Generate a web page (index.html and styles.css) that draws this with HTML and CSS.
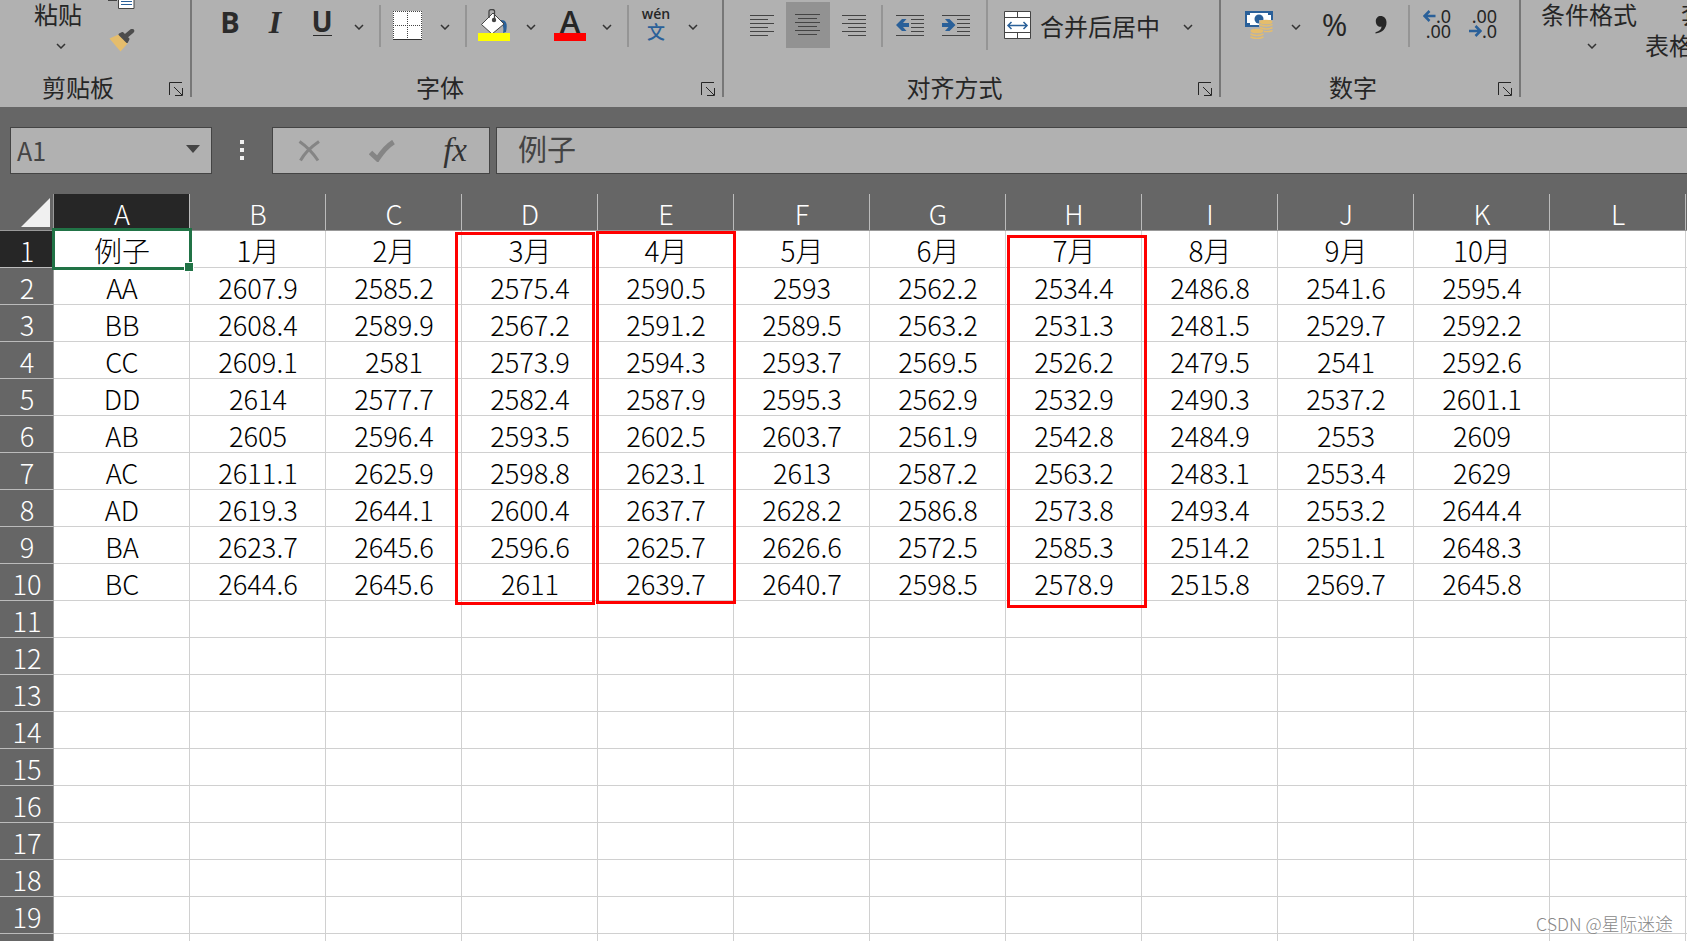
FILE: index.html
```html
<!DOCTYPE html>
<html lang="zh-CN">
<head>
<meta charset="utf-8">
<title>例子</title>
<link rel="stylesheet" href="styles.css">
</head>
<body>
<svg class="defs" width="0" height="0">
  <symbol id="chev" viewBox="0 0 10 6"><path d="M1 1l4 4 4-4" fill="none" stroke="#333" stroke-width="1.5"/></symbol>
  <symbol id="launch" viewBox="0 0 14 14"><path d="M.5 13V.5H13M5 5l8 8M13.5 6v7.500H6" fill="none" stroke="#262626"/></symbol>
</svg>
<div class="ribbon">
  <section class="group g-clip">
    <div class="clip-tools">
      <div class="stack"><span>粘贴</span><svg class="chev down"><use href="#chev"/></svg></div>
      <div class="clip-icons">
        <svg width="28" height="10"><path d="M0 .5h9" stroke="#444"/><path d="M10.500-3v11.500h15.500V-3" fill="#fff" stroke="#444"/><path d="M13 1.500h11M13 4.500h11" stroke="#2a6099"/></svg>
        <svg class="brush" width="27" height="24"><path d="M1.500 9.500l9-4 9 9-7 8z" fill="#e5bd6c"/><path d="M11.500 5.500l3-1.500 6 6-1.500 3z" fill="#4d4d4d" stroke="#4d4d4d" stroke-linejoin="round" stroke-width="2"/><path d="M18 7l6-5" stroke="#4d4d4d" stroke-width="4.500" stroke-linecap="round"/></svg>
      </div>
    </div>
    <div class="caption"><span>剪贴板</span><svg width="14" height="14"><use href="#launch"/></svg></div>
  </section>
  <section class="group g-font">
    <div class="tools">
      <b class="bold">B</b><i class="ital">I</i><b class="under">U</b><svg class="chev"><use href="#chev"/></svg><hr>
      <svg width="29" height="29"><path fill="#fff" d="M0 0h29v29H0z"/><path d="M0 .5h29M.5 0v28M28.500 0v28M14.500 0v28M0 14.500h29" stroke="#444" stroke-dasharray="1 1"/><path d="M0 28.500h29" stroke="#333"/></svg>
      <svg class="chev"><use href="#chev"/></svg><hr>
      <svg width="32" height="32"><path d="M23 11c5 0 7 3 5 12l-3 1c1-5 0-8-3-11z" fill="#2a6099"/><path d="M3.500 15.500L15 4l11 11-12 10z" fill="#fff" stroke="#444"/><path d="M11 9V2.500q0-2 3-2t2.500 3V10" fill="none" stroke="#444" stroke-width="1.300"/><circle cx="16" cy="11" r="2.200" fill="#444"/><path fill="#ff0" d="M0 24h32v8H0z"/></svg>
      <svg class="chev"><use href="#chev"/></svg>
      <div class="fcolor"><span>A</span></div>
      <svg class="chev"><use href="#chev"/></svg><hr>
      <div class="pinyin"><span>wén</span><em>文</em></div>
      <svg class="chev"><use href="#chev"/></svg>
    </div>
    <div class="caption"><span>字体</span><svg width="14" height="14"><use href="#launch"/></svg></div>
  </section>
  <section class="group g-align">
    <div class="tools">
      <svg width="24" height="22"><path d="M0 1.500h24M0 5.500h18M0 9.500h24M0 13.500h18M0 17.500h24M0 21.500h18" stroke="#444"/></svg>
      <div class="active"><svg width="26" height="22"><path d="M0 .5h25M3 4.500h19M0 8.500h25M3 12.500h19M0 16.500h25M3 20.500h19" stroke="#444"/></svg></div>
      <svg width="24" height="22"><path d="M0 1.500h24M6 5.500h18M0 9.500h24M6 13.500h18M0 17.500h24M6 21.500h18" stroke="#444"/></svg><hr>
      <svg width="28" height="22"><path d="M0 1.500h28M15 5.500h13M15 9.500h13M15 13.500h13M15 17.500h13M0 21.500h28" stroke="#444"/><path d="M0 11l6-6h4.500L7 9h6v4H7l3.500 4H6z" fill="#2a6099"/></svg>
      <svg width="28" height="22"><path d="M0 1.500h28M15 5.500h13M15 9.500h13M15 13.500h13M15 17.500h13M0 21.500h28" stroke="#444"/><path d="M13.500 11l-6-6H3l3.500 4H0v4h6.500L3 17h4.500z" fill="#2a6099"/></svg><hr class="tall">
      <svg width="27" height="28"><path d="M.5.500h26v27H.5zM.5 6.500h26M.5 21.500h26M13.500.500v6M13.500 21.500v6" fill="#fff" stroke="#444"/><path d="M3.500 14.500h20M7.500 11L4 14.500 7.500 18M19.500 11l3.500 3.500-3.500 3.500" fill="none" stroke="#2a6099" stroke-width="1.500"/></svg>
      <span class="merge">合并后居中</span><svg class="chev"><use href="#chev"/></svg>
    </div>
    <div class="caption"><span>对齐方式</span><svg width="14" height="14"><use href="#launch"/></svg></div>
  </section>
  <section class="group g-num">
    <div class="tools">
      <svg width="28" height="28"><path fill="#2a6099" d="M0 0h28v16H0z"/><path d="M5 2h18v2h3v8h-3v2H5v-2H2V4h3z" fill="#fff"/><circle cx="14" cy="8" r="4.500" fill="#2a6099"/><path d="M14 9h14v13H19v6H5V17h9z" fill="#b1b1b1"/><g fill="#e5bd6c"><ellipse cx="21" cy="11" rx="6.500" ry="2.300"/><ellipse cx="12" cy="20" rx="6.500" ry="2.300"/></g><path d="M14.500 13.500q6.500 3 13 0M15 16.500q6.500 3 12.500 0M19 20.500q5 .5 8.500-1M5.500 23q6.500 3 13 0M5.500 26q6.500 3 13 0" fill="none" stroke="#e5bd6c" stroke-width="1.500"/></svg>
      <svg class="chev"><use href="#chev"/></svg>
      <span class="pct">%</span>
      <svg width="12" height="18"><path d="M5.500 0C9 0 11.500 2.500 11.500 6.500c0 6-4 10-11 11v-1.300c4-1 6-3 6-5.700C3 11.500.8 8.500.8 5.200.8 2 3 0 5.500 0z" fill="#262626"/></svg><hr>
      <div class="dec"><span><svg width="13" height="12"><path d="M12.500 6H2M6.500 1L1.500 6l5 5" fill="none" stroke="#2a6099" stroke-width="2.500"/></svg>.0</span><span>.00</span></div>
      <div class="dec"><span>.00</span><span><svg width="13" height="12"><path d="M0 6h11M6.500 1l5 5-5 5" fill="none" stroke="#2a6099" stroke-width="2.500"/></svg>.0</span></div>
    </div>
    <div class="caption"><span>数字</span><svg width="14" height="14"><use href="#launch"/></svg></div>
  </section>
  <section class="g-style">
    <div class="stack"><span>条件格式</span><svg class="chev down"><use href="#chev"/></svg></div>
    <div class="tablefmt"><span class="indent">套用</span><span>表格格式</span></div>
  </section>
</div>
<div class="formula">
  <div class="box name"><span>A1</span><svg width="14" height="8"><path d="M0 0h14L7 8z" fill="#444"/></svg></div>
  <div class="dots"><i></i><i></i><i></i></div>
  <div class="box fx">
    <svg width="22" height="22"><path d="M1.500 1.500C8 6 15 13 20 20.500M21 1.500C13 7 6 14 2.500 20.500" fill="none" stroke="#858585" stroke-width="3"/></svg>
    <svg width="26" height="22"><path d="M1.500 12.500l7 6.500C13 12 18 6 24.500 2" fill="none" stroke="#858585" stroke-width="5"/></svg>
    <span>fx</span>
  </div>
  <div class="box value">例子</div>
</div>
<div class="sheet">
  <div class="head"><div class="corner"><svg width="29" height="29"><path d="M29 0v29H0z" fill="#f0f0f0"/></svg></div><span class="sel">A</span><span>B</span><span>C</span><span>D</span><span>E</span><span>F</span><span>G</span><span>H</span><span>I</span><span>J</span><span>K</span><span>L</span></div>
  <div class="row title"><b class="sel">1</b><span>例子</span><span>1月</span><span>2月</span><span>3月</span><span>4月</span><span>5月</span><span>6月</span><span>7月</span><span>8月</span><span>9月</span><span>10月</span></div>
  <div class="row"><b>2</b><span>AA</span><span>2607.9</span><span>2585.2</span><span>2575.4</span><span>2590.5</span><span>2593</span><span>2562.2</span><span>2534.4</span><span>2486.8</span><span>2541.6</span><span>2595.4</span></div>
  <div class="row"><b>3</b><span>BB</span><span>2608.4</span><span>2589.9</span><span>2567.2</span><span>2591.2</span><span>2589.5</span><span>2563.2</span><span>2531.3</span><span>2481.5</span><span>2529.7</span><span>2592.2</span></div>
  <div class="row"><b>4</b><span>CC</span><span>2609.1</span><span>2581</span><span>2573.9</span><span>2594.3</span><span>2593.7</span><span>2569.5</span><span>2526.2</span><span>2479.5</span><span>2541</span><span>2592.6</span></div>
  <div class="row"><b>5</b><span>DD</span><span>2614</span><span>2577.7</span><span>2582.4</span><span>2587.9</span><span>2595.3</span><span>2562.9</span><span>2532.9</span><span>2490.3</span><span>2537.2</span><span>2601.1</span></div>
  <div class="row"><b>6</b><span>AB</span><span>2605</span><span>2596.4</span><span>2593.5</span><span>2602.5</span><span>2603.7</span><span>2561.9</span><span>2542.8</span><span>2484.9</span><span>2553</span><span>2609</span></div>
  <div class="row"><b>7</b><span>AC</span><span>2611.1</span><span>2625.9</span><span>2598.8</span><span>2623.1</span><span>2613</span><span>2587.2</span><span>2563.2</span><span>2483.1</span><span>2553.4</span><span>2629</span></div>
  <div class="row"><b>8</b><span>AD</span><span>2619.3</span><span>2644.1</span><span>2600.4</span><span>2637.7</span><span>2628.2</span><span>2586.8</span><span>2573.8</span><span>2493.4</span><span>2553.2</span><span>2644.4</span></div>
  <div class="row"><b>9</b><span>BA</span><span>2623.7</span><span>2645.6</span><span>2596.6</span><span>2625.7</span><span>2626.6</span><span>2572.5</span><span>2585.3</span><span>2514.2</span><span>2551.1</span><span>2648.3</span></div>
  <div class="row"><b>10</b><span>BC</span><span>2644.6</span><span>2645.6</span><span>2611</span><span>2639.7</span><span>2640.7</span><span>2598.5</span><span>2578.9</span><span>2515.8</span><span>2569.7</span><span>2645.8</span></div>
  <div class="row"><b>11</b></div>
  <div class="row"><b>12</b></div>
  <div class="row"><b>13</b></div>
  <div class="row"><b>14</b></div>
  <div class="row"><b>15</b></div>
  <div class="row"><b>16</b></div>
  <div class="row"><b>17</b></div>
  <div class="row"><b>18</b></div>
  <div class="row"><b>19</b></div>
  <div class="row"><b></b></div>
  <div class="cursor"></div><div class="handle"></div>
  <div class="mark mark-d"></div><div class="mark mark-e"></div><div class="mark mark-h"></div>
  <div class="watermark">CSDN @星际迷途</div>
</div>
</body>
</html>
```
FILE: styles.css
```css
* { box-sizing: border-box; }
body { margin: 0; width: 1687px; height: 941px; overflow: hidden; background: #666; font-family: "Noto Sans CJK SC", sans-serif; color: #262626; }
svg { display: block; flex: none; }
.defs { position: absolute; }

.ribbon { display: flex; height: 107px; background: #b1b1b1; overflow: hidden; font-size: 24px; line-height: 31px; white-space: nowrap; }
.group { flex: none; height: 97px; border-right: 2px solid #777; display: flex; flex-direction: column; justify-content: space-between; }
.g-clip { width: 192px; }
.g-font { width: 532px; }
.g-align { width: 497px; }
.g-num { width: 300px; }
.caption { display: flex; align-items: flex-end; padding-right: 7px; height: 25px; padding-bottom: 1px; }
.caption span { flex: 1; text-align: center; line-height: 18px; margin-left: -1px; }
.caption svg { margin-left: 12px; }
.tools { display: grid; align-items: center; justify-items: center; height: 51px; }
.g-font .tools { padding-left: 16px; grid-template-columns: 44px 46px 48px 26px 16px 39px 37px 4px 52px 23px 54px 21px 20px 36px 39px; }
.g-align .tools { padding-left: 14px; grid-template-columns: 48px 44px 48px 8px 48px 44px 18px 43px 122px 55px; }
.g-num .tools { padding-left: 14px; grid-template-columns: 48px 26px 51px 41px 16px 40px 52px; }
hr { width: 2px; height: 42px; margin: 0; border: 0; background: #959595; }
hr.tall { height: 50px; align-self: start; }
.tools svg:not(.chev) { margin-top: -1px; }
.chev { width: 10px; height: 6px; margin: 2px 1px 0 0; }
.clip-tools { display: flex; height: 60px; padding-left: 34px; }
.stack { display: flex; flex-direction: column; align-items: center; line-height: 28px; }
.down { margin: 15px 0 0 6px; }
.clip-icons { padding-left: 26px; }
.brush { margin: 19px 0 0 0; }
.bold, .under { font: 700 29px/30px "Open Sans", sans-serif; color: #2b2b2b; margin-top: -8px; }
.under { font-size: 28px; line-height: 26px; height: 28px; width: 19px; display: flex; justify-content: center; border-bottom: 1px solid #2b2b2b; margin-top: -7px; }
.ital { font: italic 700 32px/30px "Liberation Serif", serif; color: #2b2b2b; margin-top: -7px; }
.fcolor { width: 32px; height: 32px; border-bottom: 8px solid #f00; display: flex; justify-content: center; font: 600 31px/26px "Open Sans", sans-serif; margin-top: -1px; }
.fcolor span { margin-top: -1px; }
.pinyin { display: flex; flex-direction: column; align-items: center; font: 600 14px/16px "Open Sans", sans-serif; margin-top: -5px; }
.pinyin em { font: 500 18px/18px "Noto Sans CJK SC", sans-serif; color: #2a6099; }
.active { width: 44px; height: 46px; background: #929292; display: flex; align-items: center; justify-content: center; margin-bottom: 1px; }
.merge { margin-top: -1px; }
.pct { font: 31px/32px "Open Sans", sans-serif; margin-top: -4px; }
.dec { display: flex; flex-direction: column; font: 18px/15px "Noto Sans", sans-serif; align-items: flex-end; margin-top: -3px; }
.dec span { display: flex; align-items: center; }
.g-style { display: flex; padding-left: 20px; }
.tablefmt { display: flex; flex-direction: column; margin-left: 8px; line-height: 31px; margin-top: -2px; }
.tablefmt .indent { padding-left: 36px; }

.formula { display: flex; height: 87px; padding: 20px 0 0 10px; color: #444; }
.box { flex: none; height: 47px; border: 1px solid #444; background: #b1b1b1; display: flex; align-items: center; }
.name { width: 202px; padding: 0 11px 0 6px; justify-content: space-between; font-size: 25px; }
.name span { margin-top: -2px; }
.name svg { margin-top: -3px; }
.dots { flex: none; width: 60px; padding: 13px 0 0 28px; display: flex; flex-direction: column; gap: 4px; }
.dots i { width: 4px; height: 4px; background: #f0f0f0; }
.fx { width: 218px; padding: 0 22px 0 25px; justify-content: space-between; }
.fx span { font: italic 33px/36px "Liberation Serif", serif; color: #333; margin-top: -2px; }
.value { width: 1200px; margin-left: 6px; padding-left: 21px; font-size: 29px; line-height: 40px; align-items: flex-start; }

.sheet { position: relative; height: 747px; overflow: hidden; background: #fff; font-size: 27.2px; font-weight: 300; color: #000; }
.head { display: flex; height: 37px; background: #666; border-bottom: 1px solid #999; color: #fff; line-height: 38px; }
.corner { width: 54px; height: 36px; padding: 4px 0 0 21px; border-right: 1px solid #999; }
.head span { width: 136px; border-right: 1px solid #bbb; padding-left: 1px; text-align: center; }
.head .sel, .row .sel { background: #262626; }
.row { display: flex; height: 37px; line-height: 38px; border-bottom: 1px solid #d0d0d0; background: repeating-linear-gradient(90deg, transparent 0 135px, #d0d0d0 135px 136px) 54px 0 no-repeat; }
.row b { width: 54px; height: 37px; flex: none; background: #666; color: #fff; font-weight: 300; text-align: center; padding-left: 1px; border-right: 1px solid #999; border-bottom: 1px solid #bbb; }
.row span { width: 136px; text-align: center; }
.title { line-height: 39px; }
.title span { font-size: 28px; }
.cursor { position: absolute; left: 52px; top: 34px; width: 140px; height: 42px; border: 3px solid #217346; }
.handle { position: absolute; left: 184px; top: 68px; width: 10px; height: 10px; background: #217346; border: 1px solid #fff; }
.mark { position: absolute; width: 140px; height: 373px; border: 3px solid #f00; }
.mark-d { left: 455px; top: 38px; }
.mark-e { left: 596px; top: 37px; }
.mark-h { left: 1007px; top: 41px; }
.watermark { position: absolute; left: 1536px; top: 717px; font-size: 17.8px; line-height: 24px; color: #888; white-space: nowrap; }
```
